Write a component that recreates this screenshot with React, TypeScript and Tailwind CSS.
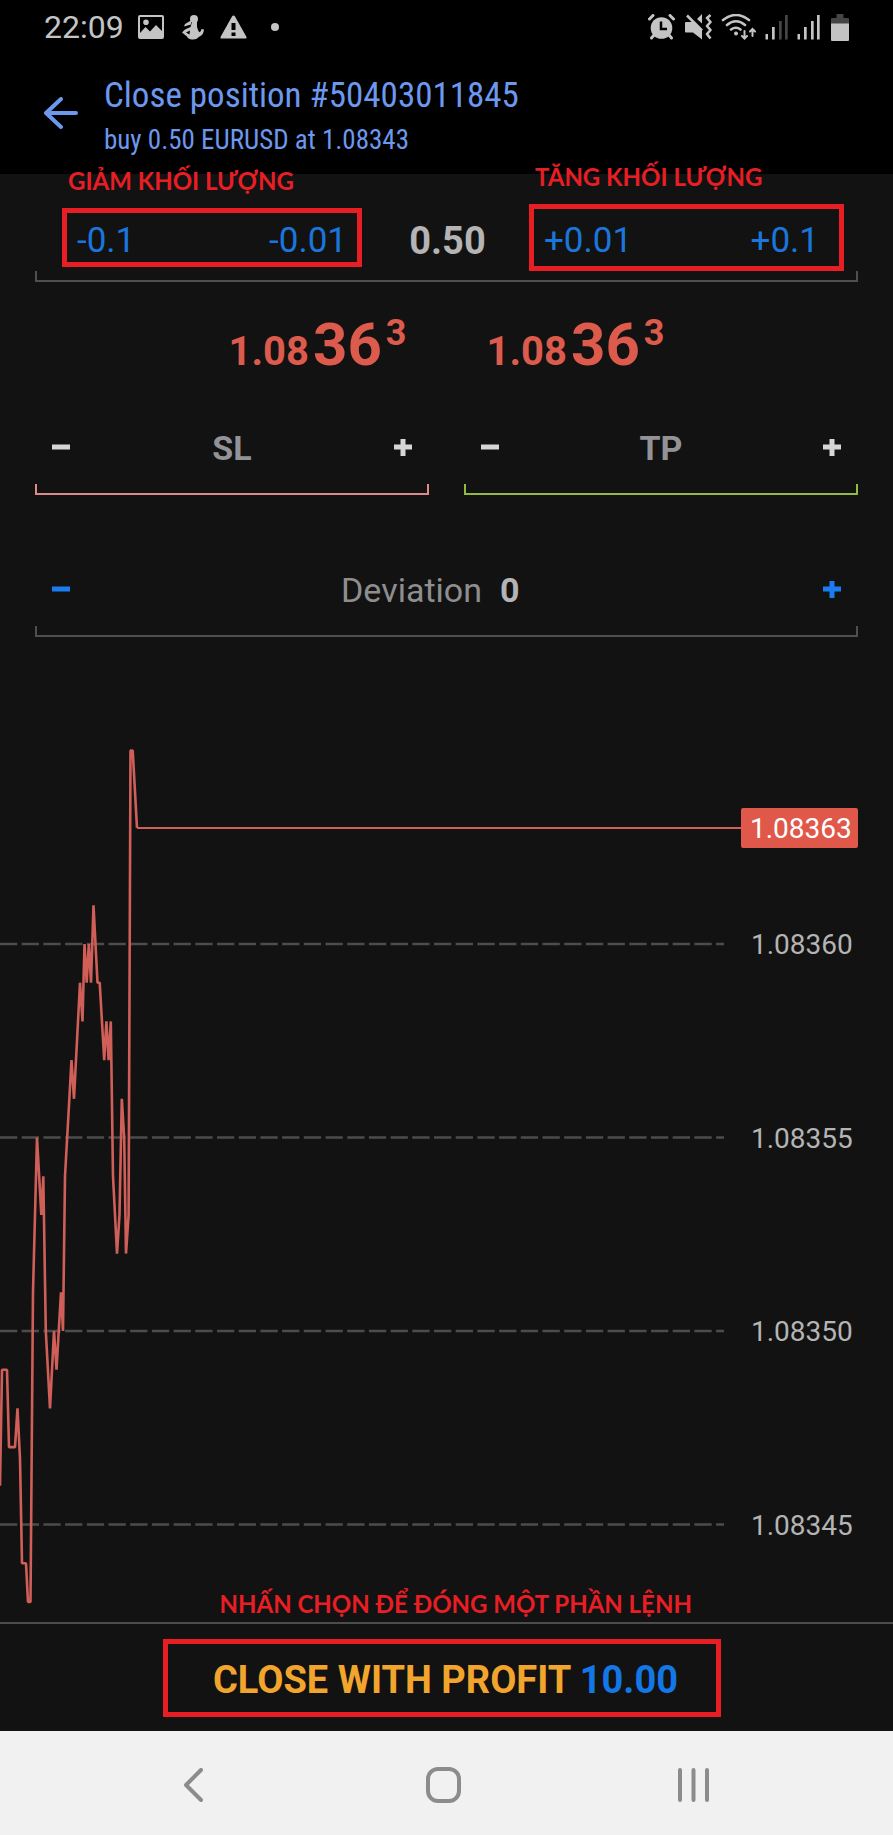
import React, { useState } from 'react';

// Ticks of the last quotes: [x, last two digits of the price]
const TICKS: [number, number][] = [
    [0, 46], [2, 49], [7, 49], [9, 47], [15, 47], [17.5, 48], [20, 46.7], [22, 44], [26, 44], [28, 43], [30.5, 43],
    [33, 51], [37, 55], [41.3, 53], [43.3, 54], [45.8, 50], [50, 48], [54, 50], [56.5, 49], [61, 51], [63, 50],
    [65, 54], [71.5, 57], [74, 56], [80, 59], [82.5, 58], [84.5, 60], [86.7, 59], [88.8, 60], [91, 59], [93.5, 61],
    [97.5, 59], [99.7, 59], [104.2, 57], [106.4, 58], [108.6, 57], [110.8, 58], [113, 54], [117, 52], [119.5, 53],
    [121.8, 56], [124.2, 55], [126, 52], [128.6, 53], [130.5, 65], [132.7, 65], [137, 63],
];

const GRID = [60, 55, 50, 45];

const priceToY = (price: number) => 307 + (60 - price) * 38.7;

const StatusBar = () => (
    <div className="flex h-[54px] items-center justify-between pl-[44px] pr-[44px] text-[#c4c4c4]">
        <div className="flex items-center">
            <span className="text-[32px] leading-[40px]">22:09</span>
            <svg className="ml-[14px]" width="26" height="24" viewBox="0 0 26 24">
                <path
                    fill="currentColor"
                    fillRule="evenodd"
                    d="M2 0H24Q26 0 26 2V22Q26 24 24 24H2Q0 24 0 22V2Q0 0 2 0ZM2 2V18L7.500 12L12 16.500L18 10L24 16V2ZM8 4.500A2.800 2.800 0 1 1 8 10.100A2.800 2.800 0 1 1 8 4.500Z"
                />
            </svg>
            <svg className="ml-[18px]" width="22" height="25" viewBox="0 0 22 25">
                <g fill="currentColor">
                    <circle cx="12" cy="4" r="4" />
                    <path d="M10 7H15Q14.500 12 16 15Q17.500 19 19 15.500L19.500 14L22 14.500Q21.500 20 17.500 21.500Q14.500 25 10 24.500Q6 24 5 21.500L0 17.500L3 14.500L8.500 12Z" />
                    <path d="M9 5.500L3 9L2 11.500L9 9.500Z" />
                </g>
                <path fill="#000" d="M4 17.500L8 15.500L7.500 19.500Z" />
            </svg>
            <svg className="ml-[16px]" width="27" height="24" viewBox="0 0 27 24">
                <path fill="currentColor" d="M13.500 0.500Q14.500 0.500 15 1.500L26.500 22Q27 23.500 25.500 23.500H1.500Q0 23.500 0.500 22L12 1.500Q12.500 0.500 13.500 0.500Z" />
                <path fill="#000" d="M11.500 8H15.500V15H11.500ZM11.500 17.500H15.500V21H11.500Z" />
            </svg>
            <span className="ml-[24px] size-2 rounded-full bg-current" />
        </div>
        <div className="flex items-center">
            <svg width="27" height="26" viewBox="0 0 27 26">
                <circle cx="13.500" cy="14" r="10.800" fill="currentColor" />
                <path fill="none" stroke="currentColor" strokeWidth="3" strokeLinecap="round" d="M1.500 5L5 1.500M22 1.500L25.500 5M6 21L3.500 24M21 21L23.500 24" />
                <path fill="none" stroke="#000" strokeWidth="2.500" d="M13 7.500V15H19" />
            </svg>
            <svg className="ml-[10px]" width="27" height="26" viewBox="0 0 27 26">
                <path fill="currentColor" d="M1 8H8L17 16V25.500L8 18.500H1Q0 18.500 0 17.500V9Q0 8 1 8ZM17 0V9.500L12 5Z" />
                <path fill="none" stroke="currentColor" strokeWidth="2.600" d="M2 1.500L17 16.500" />
                <path fill="none" stroke="currentColor" strokeWidth="2.600" strokeLinejoin="round" d="M25.500 1L22 4L25.500 8L22 12L25.500 16L22 20L25.500 24.500" />
            </svg>
            <svg className="ml-[9px]" width="35" height="26" viewBox="0 0 35 26" fill="none" stroke="currentColor" strokeLinecap="round">
                <path strokeWidth="2.600" d="M2 6Q15 -4 28 6M6 11Q15 3.500 24 11M10 15.500Q15 12 19.500 15.500" />
                <circle cx="15" cy="19.500" r="2" fill="currentColor" stroke="none" />
                <path strokeWidth="2" d="M23.500 17V24M21 22L23.500 24.500L26 22M31.500 22V15M29 17.500L31.500 15L34 17.500" />
            </svg>
            <svg className="ml-[9px]" width="24" height="26" viewBox="0 0 24 26" fill="currentColor">
                <path d="M0.500 20H3V25.500H0.500ZM7 13H9.700V25.500H7Z" />
                <path fill="#464646" d="M14 7H16.700V25.500H14ZM20 1H22.700V25.500H20Z" />
            </svg>
            <svg className="ml-[8px]" width="24" height="26" viewBox="0 0 24 26" fill="currentColor">
                <path d="M0.500 20H3V25.500H0.500ZM7 13H9.700V25.500H7ZM14 7H16.700V25.500H14ZM20 1H22.700V25.500H20Z" />
            </svg>
            <svg className="ml-[10px]" width="18" height="27" viewBox="0 0 18 27">
                <path fill="#464646" d="M5.500 0H12.500V4H17Q18 4 18 5V10H0V5Q0 4 1 4H5.500Z" />
                <path fill="currentColor" d="M0 9.500H18V26Q18 27 17 27H1Q0 27 0 26Z" />
            </svg>
        </div>
    </div>
);

const Bracket = ({ className }: { className: string }) => (
    <div className={`h-[11px] border-2 border-t-0 ${className}`} />
);

const Minus = () => (
    <svg width="18" height="18" viewBox="0 0 18 18" fill="currentColor">
        <path d="M0 5.500H18V10.500H0Z" />
    </svg>
);

const Plus = () => (
    <svg width="18" height="18" viewBox="0 0 18 18" fill="currentColor">
        <path d="M0 5.500H6.500V0H11.500V5.500H18V10.500H11.500V17H6.500V10.500H0Z" />
    </svg>
);

const Note = ({ children, className }: { children: React.ReactNode; className: string }) => (
    <span className={`absolute whitespace-nowrap font-[Lato,'Open_Sans',sans-serif] text-[24px] font-bold leading-[32px] text-[#e81e25] ${className}`}>
        {children}
    </span>
);

const Quote = () => (
    <div className="flex h-[72px] items-baseline font-bold leading-[72px] text-[#dc5b4c]">
        <span className="text-[40px]">1.08</span>
        <span className="ml-1 text-[60px]">36</span>
        <span className="relative bottom-5 ml-1 text-[36px]">3</span>
    </div>
);

const LevelField = ({ name, line }: { name: string; line: string }) => {
    const [value, setValue] = useState('');

    return (
        <div className="min-w-0 flex-1">
            <div className="flex h-[72px] items-center justify-between px-[17px] text-[#d6d6d6]">
                <button aria-label={`Decrease ${name}`}><Minus /></button>
                <input
                    aria-label={name}
                    placeholder={name}
                    value={value}
                    onChange={(e) => setValue(e.target.value)}
                    className="w-40 bg-transparent text-center text-[34px] font-bold leading-[44px] outline-none placeholder:text-[#929297]"
                />
                <button aria-label={`Increase ${name}`}><Plus /></button>
            </div>
            <Bracket className={line} />
        </div>
    );
};

const App = () => {
    const [volume, setVolume] = useState('0.50');
    const [deviation, setDeviation] = useState('0');

    const changeVolume = (step: number) => {
        setVolume((v) => Math.max(0.01, Number(v) + step).toFixed(2));
    };

    const changeDeviation = (step: number) => {
        setDeviation((v) => String(Math.max(0, Number(v) + step)));
    };

    return (
        <div className="min-h-screen bg-[#121212] font-[Roboto,sans-serif] text-[#b4b4b4]">
            <header className="bg-black">
                <StatusBar />
                <div className="flex h-[120px] items-center pl-[44px] text-[#6c98ee]">
                    <button aria-label="Back">
                        <svg width="35" height="34" viewBox="0 0 35 34" fill="none" stroke="currentColor" strokeWidth="4" strokeLinecap="round" strokeLinejoin="round">
                            <path d="M17 2L2 16L17 30M3 16H32" />
                        </svg>
                    </button>
                    <div className="ml-[25px] pt-2 font-['Roboto_Condensed',Roboto,sans-serif]">
                        <h1 className="text-[35px] leading-[44px]">Close position #50403011845</h1>
                        <p className="text-[27px] leading-[44px]">buy 0.50 EURUSD at 1.08343</p>
                    </div>
                </div>
            </header>

            <main>
                {/* Order form */}
                <section className="px-[35px]">
                    <div className="grid grid-cols-[300fr_167fr_315fr] items-center pl-[27px] pr-[14px] pt-[30px] text-[35px] leading-[44px] text-[#1b76dc]">
                        <div className="relative flex h-[59px] items-center justify-between border-[5px] border-[#e81e25] pl-[10px] pr-[10px] pt-1.5">
                            <Note className="bottom-full left-px mb-4">GIẢM KHỐI LƯỢNG</Note>
                            <button onClick={() => changeVolume(-0.1)}>-0.1</button>
                            <button onClick={() => changeVolume(-0.01)}>-0.01</button>
                        </div>
                        <input
                            aria-label="Volume"
                            value={volume}
                            onChange={(e) => setVolume(e.target.value)}
                            className="w-full min-w-0 bg-transparent pl-1 pt-1.5 text-center text-[38px] font-bold text-[#b4b4b4] outline-none"
                        />
                        <div className="relative flex h-[67px] items-center justify-between border-[5px] border-[#e81e25] pl-[10px] pr-5 pt-1.5">
                            <Note className="bottom-full left-px mb-4">TĂNG KHỐI LƯỢNG</Note>
                            <button onClick={() => changeVolume(0.01)}>+0.01</button>
                            <button onClick={() => changeVolume(0.1)}>+0.1</button>
                        </div>
                    </div>
                    <Bracket className="border-[#4f4f4f]" />

                    <div className="flex justify-center gap-20 pt-[27px]">
                        <Quote />
                        <Quote />
                    </div>

                    <div className="flex gap-[35px] pt-[31px]">
                        <LevelField name="SL" line="border-[#dc8c88]" />
                        <LevelField name="TP" line="border-[#94b844]" />
                    </div>

                    <div className="pt-[59px]">
                        <div className="flex h-[72px] items-center justify-between px-[17px] text-[#1a7cf0]">
                            <button aria-label="Decrease deviation" onClick={() => changeDeviation(-1)}><Minus /></button>
                            <div className="flex items-center gap-[18px] text-[34px] leading-[44px]">
                                <label htmlFor="deviation" className="text-[#8e8e8e]">Deviation</label>
                                <input
                                    id="deviation"
                                    value={deviation}
                                    onChange={(e) => setDeviation(e.target.value)}
                                    className="mr-7 w-6 bg-transparent font-bold text-[#b4b4b4] outline-none"
                                />
                            </div>
                            <button aria-label="Increase deviation" onClick={() => changeDeviation(1)}><Plus /></button>
                        </div>
                        <Bracket className="border-[#4f4f4f]" />
                    </div>
                </section>

                {/* Tick chart */}
                <section className="flex h-[985px]">
                    <svg className="h-full min-w-0 flex-1">
                        {GRID.map((price) => (
                            <line key={price} x1="0" x2="100%" y1={priceToY(price)} y2={priceToY(price)} stroke="#4c4c4c" strokeWidth="2.400" strokeDasharray="17.3 4.4" />
                        ))}
                        <line x1="137" x2="100%" y1={priceToY(63)} y2={priceToY(63)} stroke="#cf5f58" strokeWidth="2" />
                        <polyline
                            fill="none"
                            stroke="#cf5f58"
                            strokeWidth="2.600"
                            strokeLinejoin="bevel"
                            points={TICKS.map(([x, price]) => `${x},${priceToY(price)}`).join(' ')}
                        />
                    </svg>
                    <div className="w-[169px] pt-[171px] text-[28px] leading-[42px]">
                        <div className="flex items-center">
                            <span className="h-0.5 w-[17px] bg-[#cf5f58]" />
                            <span className="h-[40px] w-[117px] rounded-[2px] bg-[#df584a] pl-[9px] text-white">1.08363</span>
                        </div>
                        <div className="mt-[76px] flex h-[621px] flex-col justify-between pl-[27px]">
                            {GRID.map((price) => (
                                <span key={price} className="h-[40px]">1.083{price}</span>
                            ))}
                        </div>
                    </div>
                </section>
            </main>

            <footer className="border-t-2 border-[#4c4c4c]">
                <div className="flex justify-center pb-[14px] pr-2.5 pt-[15px]">
                    <div className="relative flex h-[78px] w-[558px] justify-center border-[5px] border-[#e81e25] pl-2 pt-1">
                        <Note className="bottom-full left-[52px] mb-6">NHẤN CHỌN ĐỂ ĐÓNG MỘT PHẦN LỆNH</Note>
                        <button className="whitespace-nowrap text-[38px] font-bold text-[#f2a52c]">
                            CLOSE WITH PROFIT <span className="text-[#1477e6]">10.00</span>
                        </button>
                    </div>
                </div>
                <nav className="flex h-[104px] items-center justify-between bg-[#f1f1f1] px-[184px] pt-1 text-[#8c8c8c]">
                    <button aria-label="Back">
                        <svg width="25" height="34" viewBox="0 0 25 34" fill="none" stroke="currentColor" strokeWidth="4" strokeLinecap="round" strokeLinejoin="round">
                            <path d="M17 2L2 17L17 32" />
                        </svg>
                    </button>
                    <button aria-label="Home">
                        <svg width="35" height="36" viewBox="0 0 35 36" fill="none" stroke="currentColor" strokeWidth="4">
                            <rect x="2" y="2" width="31" height="32" rx="10" />
                        </svg>
                    </button>
                    <button aria-label="Recent apps">
                        <svg width="31" height="34" viewBox="0 0 31 34" fill="none" stroke="currentColor" strokeWidth="4" strokeLinecap="round">
                            <path d="M2 2V32M15.500 2V32M29 2V32" />
                        </svg>
                    </button>
                </nav>
            </footer>
        </div>
    );
};

export default App;
